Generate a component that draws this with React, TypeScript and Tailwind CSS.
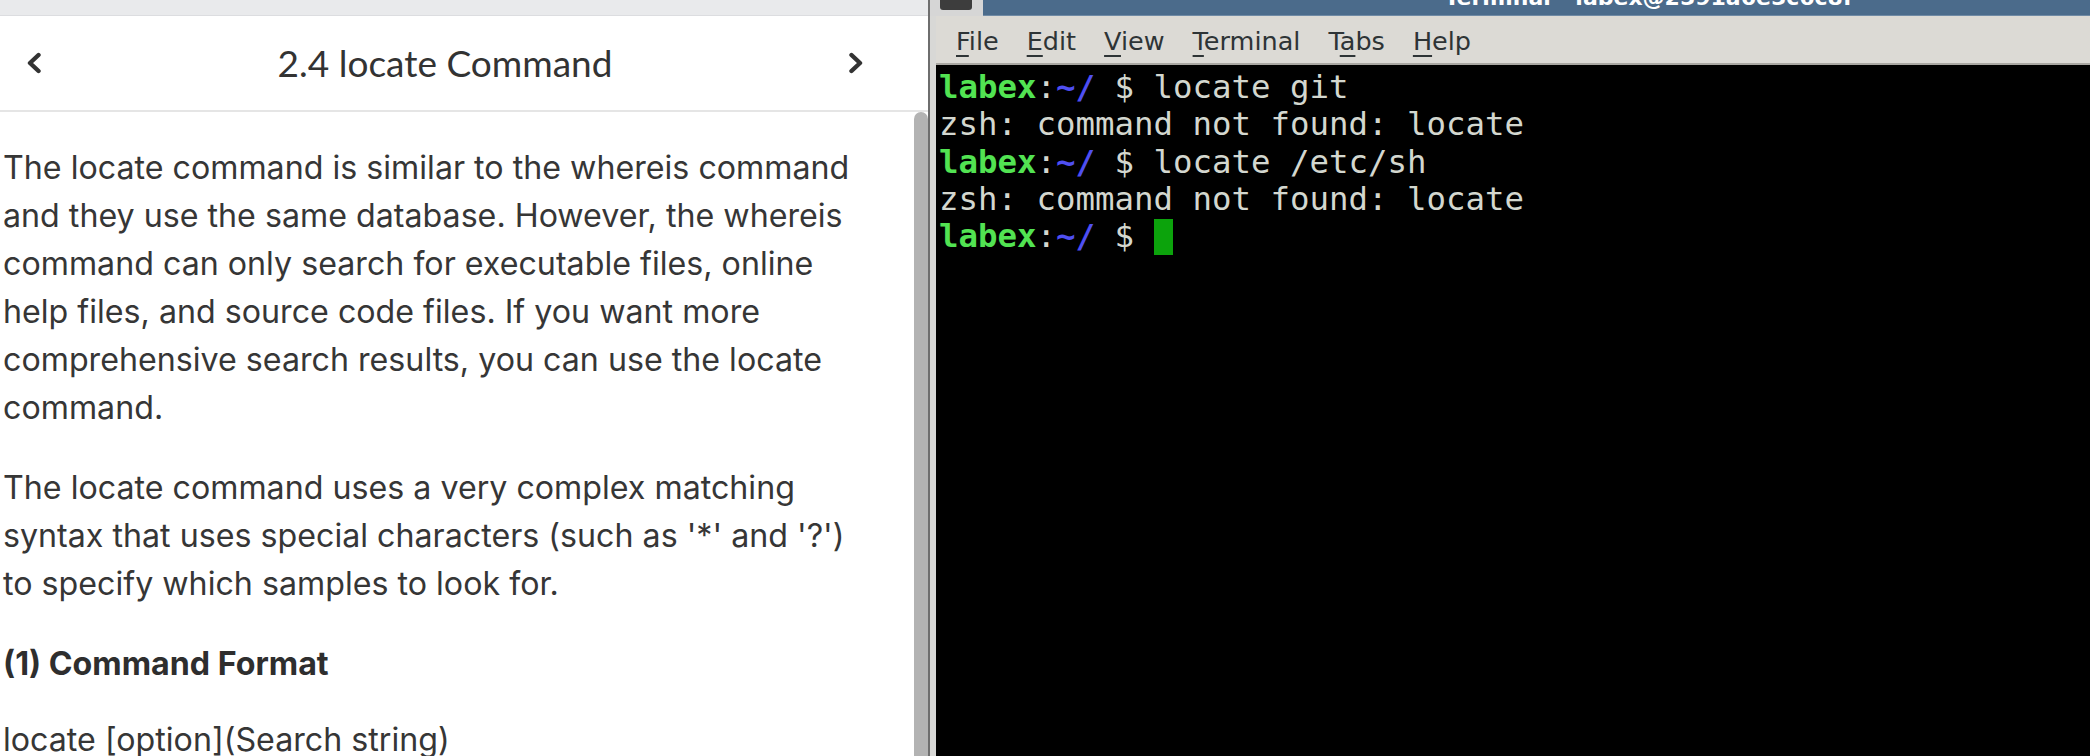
import { type FC } from "react";

const Chevron: FC<{ dir: "left" | "right" }> = ({ dir }) => (
  <svg width="16" height="22" viewBox="0 0 16 22" fill="none">
    <polyline
      points={dir === "left" ? "12.5,3 4,11 12.5,19" : "3.5,3 12,11 3.5,19"}
      stroke="#333333"
      strokeWidth="4.4"
      strokeLinecap="round"
      strokeLinejoin="round"
    />
  </svg>
);

const menuItems: { key: string; before: string; rest: string }[] = [
  { key: "F", before: "", rest: "ile" },
  { key: "E", before: "", rest: "dit" },
  { key: "V", before: "", rest: "iew" },
  { key: "T", before: "", rest: "erminal" },
  { key: "a", before: "T", rest: "bs" },
  { key: "H", before: "", rest: "elp" },
];

const Prompt: FC = () => (
  <>
    <span className="font-bold text-[#52e352]">labex</span>
    <span>:</span>
    <span className="font-bold text-[#4f4ff2]">~/</span>
    <span> $ </span>
  </>
);

const LessonPanel: FC = () => (
  <div className="flex h-full w-[928px] shrink-0 flex-col bg-white">
    {/* browser strip */}
    <div className="h-[16px] shrink-0 border-b border-[#dcdde0] bg-[#e9eaec]" />

    {/* step header */}
    <div className="flex h-[96px] shrink-0 items-center border-b-2 border-[#e5e5e5] pr-[64px] pl-[26px]">
      <Chevron dir="left" />
      <h1
        className="flex-1 text-center text-[37px] text-[#333333]"
        style={{ fontFamily: "Lato, sans-serif" }}
      >
        2.4 locate Command
      </h1>
      <Chevron dir="right" />
    </div>

    <div className="flex min-h-0 flex-1">
      <div
        className="min-w-0 flex-1 overflow-hidden pt-[32px] pl-[3px] text-[32.2px] leading-[48px] text-[#363636]"
        style={{ fontFamily: "Inter, sans-serif" }}
      >
        <p className="w-[872px]">
          The locate command is similar to the whereis command and they use the same
          database. However, the whereis command can only search for executable files,
          online help files, and source code files. If you want more comprehensive search
          results, you can use the locate command.
        </p>
        <p className="mt-[32px] w-[872px]">
          The locate command uses a very complex matching syntax that uses special
          characters (such as '*' and '?') to specify which samples to look for.
        </p>
        <h2 className="mt-[32px] font-bold text-[#2e2e2e]">(1) Command Format</h2>
        <p className="mt-[28px] whitespace-nowrap">locate [option](Search string)</p>
      </div>
      {/* scrollbar */}
      <div className="w-[14px] shrink-0 rounded-t-[7px] bg-[#b3b3b3]" />
    </div>
  </div>
);

const TerminalWindow: FC = () => (
  <div className="flex h-full min-w-0 flex-1 flex-col bg-[#d6d6d6]">
    {/* title bar */}
    <div className="flex h-[16px] shrink-0">
      <div className="w-[10px] shrink-0" />
      <div className="h-[10px] w-[32px] shrink-0 rounded-b-[3px] bg-[#3d3d3d]" />
      <div className="w-[11px] shrink-0" />
      <div className="flex flex-1 justify-center overflow-hidden border-b border-[#6f8aa5] bg-[#4b6b8b] pl-[224px]">
        <span
          className="-mt-[15px] text-[22px] leading-[26px] font-bold whitespace-nowrap text-white"
          style={{ fontFamily: "'DejaVu Sans', sans-serif" }}
        >
          Terminal - labex@2591a6e5c6c8f
        </span>
      </div>
    </div>

    <div className="flex min-h-0 flex-1">
      <div className="w-[6px] shrink-0 bg-[#d8d8d6]" />
      <div className="flex min-w-0 flex-1 flex-col">
        {/* menu bar */}
        <div
          className="flex h-[49px] shrink-0 items-center gap-[28px] border-b-2 border-[#a9a7a2] bg-[#dcdad5] pt-[4px] pl-[20px] text-[25.5px] text-[#2e3436]"
          style={{ fontFamily: "'DejaVu Sans', sans-serif" }}
        >
          {menuItems.map((m) => (
            <span key={m.key + m.rest}>
              {m.before}
              <span className="underline decoration-[2px] underline-offset-[5px]">{m.key}</span>
              {m.rest}
            </span>
          ))}
        </div>

        {/* terminal */}
        <div
          className="min-h-0 flex-1 overflow-hidden bg-black pt-[4px] pl-[3px] text-[32.4px] leading-[37.3px] whitespace-pre text-[#d3d7cf]"
          style={{ fontFamily: "'DejaVu Sans Mono', monospace" }}
        >
          <div>
            <Prompt />
            locate git
          </div>
          <div>zsh: command not found: locate</div>
          <div>
            <Prompt />
            locate /etc/sh
          </div>
          <div>zsh: command not found: locate</div>
          <div className="flex items-center">
            <span>
              <Prompt />
            </span>
            <span className="inline-block h-[36px] w-[19.5px] bg-[#0ca30c]" />
          </div>
        </div>
      </div>
    </div>
  </div>
);

export default function App() {
  return (
    <div className="flex h-[756px] w-[2090px] overflow-hidden bg-white">
      <LessonPanel />
      <div className="w-[2px] shrink-0 bg-[#6e6e6e]" />
      <TerminalWindow />
    </div>
  );
}
